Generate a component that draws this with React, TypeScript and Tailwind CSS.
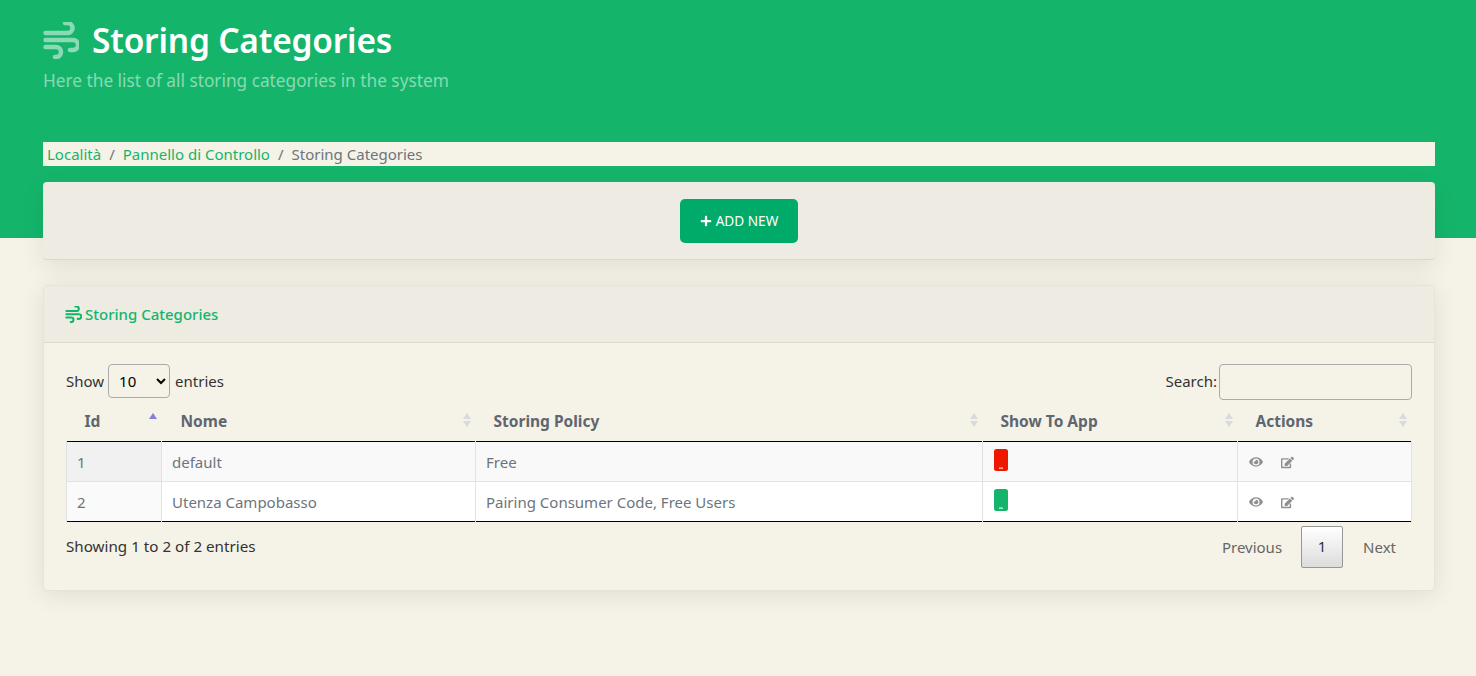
import { FaPlus, FaEye, FaEdit } from "react-icons/fa";

const Wind = ({ className }: { className: string }) => (
  <svg viewBox="5 5 36 37" fill="none" stroke="currentColor" strokeWidth="4.5" strokeLinecap="round" className={className}>
    <path d="M7.5 16H29a5 5 0 0 0 1-10h-3M7.5 23H35a5 5 0 0 1 0 10h-3M7.5 30H18a5 5 0 0 1 0 10h-1" />
  </svg>
);

const SortArrows = ({ active = false }: { active?: boolean }) => (
  <span className="absolute right-[5px] top-[9px] flex flex-col gap-[2px]">
    <span
      className={`w-0 h-0 border-x-[4px] border-x-transparent border-b-[6px] ${
        active ? "border-b-[#8480d8]" : "border-b-[#d9dadb]"
      }`}
    />
    {!active && (
      <span className="w-0 h-0 border-x-[4px] border-x-transparent border-t-[6px] border-t-[#d9dadb]" />
    )}
  </span>
);

const Phone = ({ className }: { className: string }) => (
  <svg viewBox="0 0 14 22" className={`w-[14px] h-[22px] ${className}`}>
    <rect width="14" height="22" rx="2.5" fill="currentColor" />
    <rect x="5" y="18.5" width="4" height="1.2" fill="#fff" opacity="0.85" />
  </svg>
);

const rows = [
  { id: 1, name: "default", policy: "Free", color: "text-[#ee1700]", bg: "bg-[#f9f9f9]", idBg: "bg-[#f1f1f1]" },
  {
    id: 2,
    name: "Utenza Campobasso",
    policy: "Pairing Consumer Code, Free Users",
    color: "text-[#14b56a]",
    bg: "bg-white",
    idBg: "bg-[#fafafa]",
  },
];

const headers = [
  { label: "Id", w: "w-[95px]", pad: "pl-[18px]", active: true },
  { label: "Nome", w: "w-[314px]", pad: "pl-[19px]" },
  { label: "Storing Policy", w: "w-[507px]", pad: "pl-[18px]" },
  { label: "Show To App", w: "w-[255px]", pad: "pl-[18px]" },
  { label: "Actions", w: "w-[174px]", pad: "pl-[18px]" },
];

export default function App() {
  return (
    <div className="min-h-[676px] bg-[linear-gradient(#14b56a_238px,#f5f2e7_238px)] font-['Noto_Sans',sans-serif] text-[15px] text-[#333]">
      <div className="pl-[43px] pr-[41px]">
        <div className="h-[142px] pt-[14px]">
          <h1 className="flex items-center text-[33.5px] leading-[52px] font-semibold text-white">
            <Wind className="w-[36px] h-[37px] text-white/50 mr-[13px]" />
            <span className="tracking-[-0.2px]">Storing Categories</span>
          </h1>
          <p className="text-[17.25px] leading-[30px] text-white/50">Here the list of all storing categories in the system</p>
        </div>

        <div className="h-[24px] flex items-center pl-[4px] pt-[1px] bg-[#f5f2e7] text-[15px] text-[#6c757d]">
          <span className="text-[#14b56a]">Località</span>
          <span className="px-[8px]">/</span>
          <span className="text-[#14b56a]">Pannello di Controllo</span>
          <span className="px-[8px]">/</span>
          <span>Storing Categories</span>
        </div>

        <div className="mt-[16px] h-[78px] flex items-center justify-center bg-[#eeebe3] rounded-[4px] border-b border-[#dcd8cf] shadow-[0_8px_24px_rgba(0,0,0,0.08)]">
          <button className="w-[118px] h-[44px] flex items-center justify-center gap-[4px] pt-[1px] rounded-[5px] bg-[#00ab69] text-white text-[13.6px]">
            <FaPlus className="text-[12px]" />
            ADD NEW
          </button>
        </div>

        <div className="mt-[25px] h-[306px] rounded-[4px] bg-[#f5f2e7] border border-[#e6e3da] shadow-[0_4px_24px_rgba(0,0,0,0.09)]">
          <div className="h-[57px] flex items-center pl-[21px] gap-[3px] bg-[#eeebe3] border-b border-[#dcd9d1] rounded-t-[4px] text-[15px] font-medium text-[#14b56a]">
            <Wind className="w-[17px] h-[17px]" />
            Storing Categories
          </div>

          <div className="px-[22px]">
            <div className="flex items-center justify-between h-[61px] pt-[16px]">
              <div className="flex items-center gap-[4px] text-[15px]">
                Show
                <select className="w-[62px] h-[34px] -mt-[2px] mr-[1px] pl-[6px] pr-[4px] border border-[#aaa] rounded-[4px] bg-[#f5f2e7] text-[15px] text-black">
                  <option>10</option>
                </select>
                entries
              </div>
              <label className="flex items-center gap-[2px] text-[15px]">
                Search:
                <input className="w-[193px] h-[36px] border border-[#aaa] rounded-[4px] bg-transparent" />
              </label>
            </div>

            <table className="w-[1345px] table-fixed border-collapse">
              <thead>
                <tr className="h-[37px] border-b border-black">
                  {headers.map((h) => (
                    <th key={h.label} className={`relative text-left ${h.w} ${h.pad} pb-[2px] text-[15.5px] font-bold text-[#5f6670]`}>
                      {h.label}
                      <SortArrows active={h.active} />
                    </th>
                  ))}
                </tr>
              </thead>
              <tbody className="text-[15px] text-[#6c757d]">
                {rows.map((r) => (
                  <tr key={r.id} className={`h-[40px] ${r.bg} border-b border-b-[#e2e2e2] last:border-b-black`}>
                    <td className={`pl-[10px] pt-[2px] border-x border-[#e2e2e2] ${r.idBg}`}>{r.id}</td>
                    <td className="pl-[10px] pt-[2px] border-r border-[#e2e2e2]">{r.name}</td>
                    <td className="pl-[10px] pt-[2px] border-r border-[#e2e2e2]">{r.policy}</td>
                    <td className="pl-[11px] border-r border-[#e2e2e2]">
                      <Phone className={`-mt-[2px] ${r.color}`} />
                    </td>
                    <td className="pl-[11px] pt-[2px] border-r border-[#e2e2e2]">
                      <div className="flex items-center gap-[18px] text-[14px] text-[#8f8f8f]">
                        <FaEye />
                        <FaEdit className="text-[13px]" />
                      </div>
                    </td>
                  </tr>
                ))}
              </tbody>
            </table>

            <div className="flex items-center justify-between mt-[4px]">
              <span className="text-[15.2px]">Showing 1 to 2 of 2 entries</span>
              <div className="flex items-center text-[15px] text-[#666]">
                <span className="px-[19px] pt-[1px]">Previous</span>
                <span className="w-[42px] h-[42px] flex items-center justify-center border border-[#979797] rounded-[2px] bg-gradient-to-b from-white to-[#dcdcdc] text-[#333]">
                  1
                </span>
                <span className="pl-[20px] pr-[16px] pt-[1px]">Next</span>
              </div>
            </div>
          </div>
        </div>
      </div>
    </div>
  );
}
